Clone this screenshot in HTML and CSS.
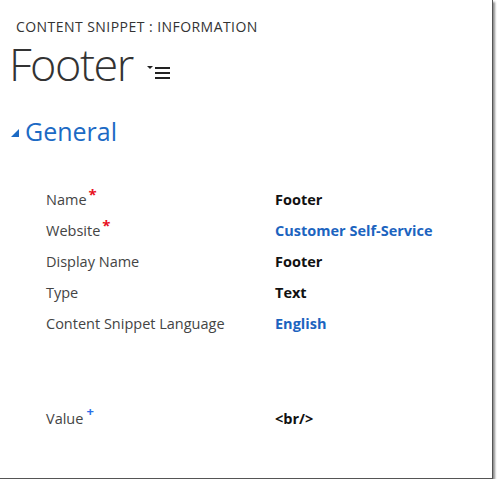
FILE: index.html
```html
<!DOCTYPE html>
<html>
<head>
<meta charset="utf-8">
<link rel="stylesheet" href="styles.css">
</head>
<body>
<div class="frame">
  <div class="entity">CONTENT SNIPPET : INFORMATION</div>
  <div class="title-row">
    <h1 class="title">Footer</h1>
    <svg class="menu" width="24" height="16" viewBox="0 0 24 16">
      <polygon points="0,0 6,0 3,3" fill="#222"/>
      <rect x="8" y="1" width="15" height="2" fill="#222"/>
      <rect x="8" y="6" width="15" height="2" fill="#222"/>
      <rect x="8" y="11" width="15" height="2" fill="#222"/>
    </svg>
  </div>
  <div class="section">
    <svg class="tri" width="8" height="8" viewBox="0 0 8 8"><polygon points="8,0 8,8 0,8" fill="#1c6ac4"/></svg>
    <h2 class="section-title">General</h2>
  </div>
  <div class="form">
    <div class="label">Name<span class="req">*</span></div><div class="val">Footer</div>
    <div class="label">Website<span class="req">*</span></div><div class="val link">Customer Self-Service</div>
    <div class="label">Display Name</div><div class="val">Footer</div>
    <div class="label">Type</div><div class="val">Text</div>
    <div class="label">Content Snippet Language</div><div class="val link">English</div>
    <div class="spacer"></div>
    <div class="label">Value<span class="rec">+</span></div><div class="val">&lt;br/&gt;</div>
  </div>
</div>
</body>
</html>
```
FILE: styles.css
```css
html, body {
  margin: 0;
  padding: 0;
  background: #fff;
}
.frame {
  width: 492px;
  height: 478px;
  border-right: 1px solid #555;
  border-bottom: 1px solid #555;
  box-shadow: 2px 2px 2px rgba(0,0,0,0.45);
  font-family: "Open Sans", "Noto Sans", sans-serif;
  color: #444;
  overflow: hidden;
}
.entity {
  padding: 17px 0 0 16px;
  font-size: 14px;
  line-height: 20px;
  color: #333;
  letter-spacing: 0.45px;
}
.title-row {
  display: flex;
  align-items: flex-start;
  margin-top: -1px;
}
.title {
  margin: 0 0 0 9px;
  font-weight: 300;
  font-size: 45px;
  line-height: 56px;
  color: #333;
  letter-spacing: -1.5px;
}
.menu {
  margin: 30px 0 0 14px;
}
.section {
  display: flex;
  align-items: center;
  margin-top: 23px;
  padding-left: 11px;
}
.tri {
  margin-top: 3px;
}
.section-title {
  margin: 0 0 0 6px;
  font-weight: 400;
  font-size: 25px;
  line-height: 32px;
  color: #1c6ac4;
}
.form {
  display: grid;
  grid-template-columns: 229px 1fr;
  grid-auto-rows: minmax(31px, auto);
  margin-top: 37px;
  padding-left: 46px;
  font-size: 14.5px;
  line-height: 31px;
}
.label {
  color: #444;
}
.val {
  font-weight: 700;
  color: #111;
}
.link {
  color: #1c64bf;
}
.req {
  color: #e81123;
  font-size: 15px;
  font-weight: 700;
  vertical-align: 5px;
  line-height: 0;
  margin-left: 2px;
}
.rec {
  color: #2b6ee8;
  font-size: 13px;
  font-weight: 700;
  vertical-align: 8px;
  line-height: 0;
  margin-left: 3px;
}
.spacer {
  grid-column: 1 / 3;
  height: 64px;
}
```
